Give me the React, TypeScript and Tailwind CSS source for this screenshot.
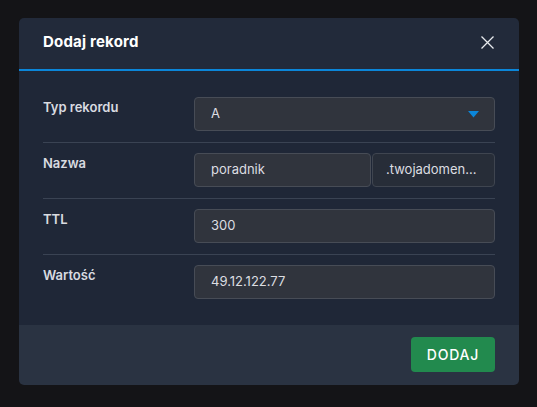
import React from 'react';

const font = { fontFamily: '"Inter", "Open Sans", sans-serif' };

const Row: React.FC<{ label: string; last?: boolean; children: React.ReactNode }> = ({ label, last, children }) => (
  <div className={`flex items-start pt-[10px] pb-[11px] ${last ? '' : 'border-b border-[#3a4353]'}`}>
    <div className="w-[151px] shrink-0 pt-[1px] text-[13px] font-semibold text-[#d9dbe0]">{label}</div>
    <div className="flex-1 min-w-0 flex gap-[1px]">{children}</div>
  </div>
);

const Field: React.FC<{ value: string; className?: string }> = ({ value, className }) => (
  <div className={`h-[34px] flex items-center px-4 rounded-[4px] border border-[#474c56] bg-[#30343d] text-[13px] text-[#dcdde1] ${className ?? 'flex-1'}`}>
    {value}
  </div>
);

export default function App() {
  return (
    <div style={font} className="w-[537px] h-[407px] bg-[#141417] overflow-hidden pt-[18px] pl-[19px]">
      <div className="w-[500px] h-[367px] rounded-[5px] overflow-hidden flex flex-col">
        {/* header */}
        <div className="h-[53px] shrink-0 bg-[#222a3a] border-b-2 border-[#0b86d9] px-6 flex items-center justify-between">
          <span className="text-[15px] font-bold text-white tracking-[0.2px] -mt-[3px]">Dodaj rekord</span>
          <svg width="13" height="13" viewBox="0 0 13 13" className="-mt-[2px] mr-[1px]">
            <path d="M0.5 0.5L12.5 12.5M12.5 0.5L0.5 12.5" stroke="#e8eaee" strokeWidth="1.3" />
          </svg>
        </div>

        {/* body */}
        <div className="bg-[#1f2737] px-6 pt-[16px] pb-[15px] flex-1">
          <Row label="Typ rekordu">
            <div className="flex-1 h-[34px] flex items-center justify-between px-4 rounded-[4px] border border-[#474c56] bg-[#30343d] text-[13px] text-[#dcdde1]">
              <span>A</span>
              <svg width="11" height="7" viewBox="0 0 11 7" className="mr-[-1px]">
                <path d="M0 0H11L5.5 6.5Z" fill="#0b86d9" />
              </svg>
            </div>
          </Row>
          <Row label="Nazwa">
            <Field value="poradnik" className="w-[177px] shrink-0" />
            <div className="flex-1 min-w-0 h-[34px] flex items-center pl-[13px] rounded-[4px] border border-[#3f4550] bg-[#272d38] text-[13px] text-[#dcdde1] whitespace-nowrap">
              .twojadomen...
            </div>
          </Row>
          <Row label="TTL">
            <Field value="300" />
          </Row>
          <Row label="Wartość" last>
            <Field value="49.12.122.77" />
          </Row>
        </div>

        {/* footer */}
        <div className="h-[60px] shrink-0 bg-[#2a3342] px-6 flex items-start justify-end pt-[12px]">
          <button className="w-[84px] h-[35px] rounded-[4px] bg-[#228a4e] text-white text-[14px] font-medium tracking-[0.8px]">
            DODAJ
          </button>
        </div>
      </div>
    </div>
  );
}
